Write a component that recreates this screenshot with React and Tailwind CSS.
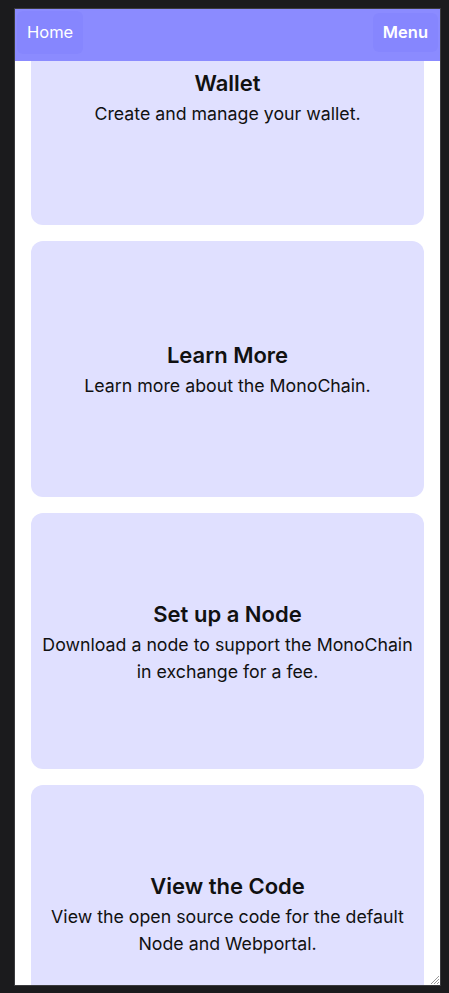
import React from 'react'

const cards = [
  { title: 'Wallet', text: 'Create and manage your wallet.' },
  { title: 'Learn More', text: 'Learn more about the MonoChain.' },
  { title: 'Set up a Node', text: 'Download a node to support the MonoChain in exchange for a fee.' },
  { title: 'View the Code', text: 'View the open source code for the default Node and Webportal.' },
]

const Card = ({ title, text }) => (
  <div className="h-64 rounded-xl bg-[#e0e0ff] flex flex-col items-center justify-center px-2 text-center text-[#111]">
    <h2 className="text-[22px] leading-[33px] font-semibold">{title}</h2>
    <p className="text-[17.75px] leading-[27px]">{text}</p>
  </div>
)

export default function App() {
  return (
    <div className="w-[449px] h-[993px] bg-[#1b1b1d] pt-2 pl-[14px] pr-2 pb-[7px]" style={{ fontFamily: 'Inter, "Noto Sans", sans-serif' }}>
      <div className="relative h-full w-full overflow-hidden border border-[#3b3b3e] bg-white">
        {/* contenido desplazado bajo la cabecera fija */}
        <div className="-mt-[40px] flex flex-col gap-4 px-4">
          {cards.map((c) => (
            <Card key={c.title} {...c} />
          ))}
        </div>

        <header className="absolute top-0 left-0 right-0 h-[52px] bg-[#8b8bff] flex items-center justify-between px-[2px] pb-[5px]">
          <button className="h-[43px] px-[10px] rounded-md bg-[#8686fe] text-white text-[16.5px]">Home</button>
          <button className="h-[39px] px-[10px] rounded-md bg-[#8686fe] text-white text-[16.5px] font-semibold">Menu</button>
        </header>

        <svg className="absolute right-0 bottom-0" width="12" height="12" viewBox="0 0 12 12">
          <path d="M11 3 L3 11 M11 6 L6 11 M11 9 L9 11" stroke="#9a9a9a" strokeWidth="1" />
        </svg>
      </div>
    </div>
  )
}
